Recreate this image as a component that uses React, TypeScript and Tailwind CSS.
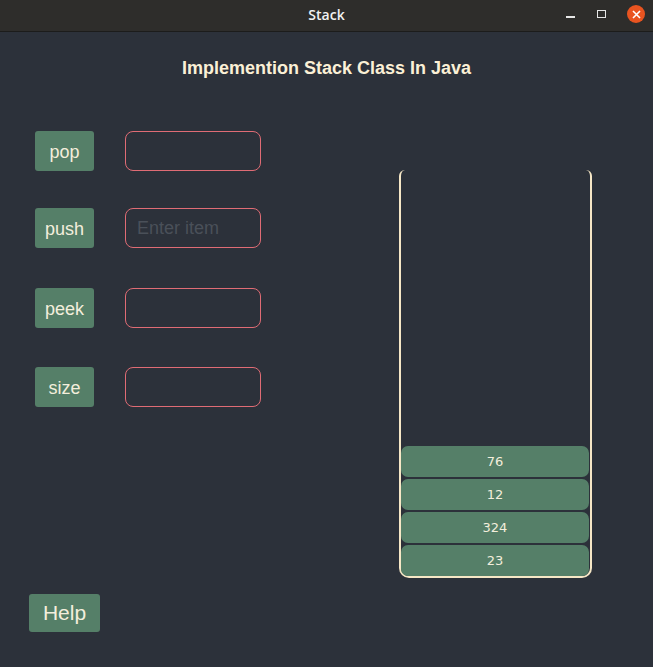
const ops = ['pop', 'push', 'peek', 'size'];
const rowGaps = ['mt-0', 'mt-[37px]', 'mt-[40px]', 'mt-[39px]'];
const stackItems = ['76', '12', '324', '23'];

const TitleBar = () => (
  <div className="relative h-[32px] shrink-0 bg-[#2e2d2b] border-b border-[#1c1c1b] flex items-center justify-center pb-[3px]">
    <span className="text-[14px] font-semibold text-[#f2f2f2] font-['Open_Sans',sans-serif]">
      Stack
    </span>
    <div className="absolute right-[8px] top-0 h-full flex items-center pb-[3px]">
      <div className="w-[9px] h-[1.5px] bg-[#e6e6e6] mt-[6px] mr-[22px]" />
      <div className="w-[9px] h-[8px] border-[1.5px] border-[#e6e6e6] mr-[21px]" />
      <div className="w-[18px] h-[18px] rounded-full bg-[#e95420] flex items-center justify-center">
        <svg width="9" height="9" viewBox="0 0 9 9">
          <path d="M1 1 L8 8 M8 1 L1 8" stroke="#fff" strokeWidth="1.6" />
        </svg>
      </div>
    </div>
  </div>
);

const OpRow = ({ name, gap }: { name: string; gap: string }) => (
  <div className={`flex items-center ${gap}`}>
    <button className="w-[59px] h-[40px] rounded-[3px] bg-[#557f68] text-[#f3eedc] text-[18px] pt-[2px]">
      {name}
    </button>
    <input
      className="ml-[31px] w-[136px] h-[40px] rounded-[8px] border border-[#e06c75] bg-transparent px-[11px] pt-[1px] text-[18px] text-[#f3eedc] outline-none placeholder:text-[#4a5059]"
      placeholder={name === 'push' ? 'Enter item' : ''}
    />
  </div>
);

export default function App() {
  return (
    <div className="w-[653px] h-[667px] flex flex-col bg-[#2c313a] font-['Liberation_Sans',Arial,sans-serif] overflow-hidden">
      <TitleBar />
      <div className="flex-1 flex flex-col">
        <h1 className="mt-[26px] h-[20px] leading-[20px] text-center text-[18px] font-bold text-[#fbf0d6]">
          Implemention Stack Class In Java
        </h1>
        <div className="flex mt-[53px]">
          <div className="flex flex-col pl-[35px]">
            {ops.map((op, i) => (
              <OpRow key={op} name={op} gap={rowGaps[i]} />
            ))}
          </div>
          <div className="ml-auto mr-[61px] mt-[39px] w-[193px] h-[408px] border-2 border-t-0 border-[#f6e7c6] rounded-t-[6px] rounded-b-[10px] flex flex-col justify-end gap-[2px] pl-0 pr-[1px]">
            {stackItems.map((v) => (
              <div
                key={v}
                className="h-[31px] rounded-[7px] bg-[#557f68] flex items-center justify-center text-[13px] text-[#f3eedc] font-['DejaVu_Sans',sans-serif]"
              >
                {v}
              </div>
            ))}
          </div>
        </div>
        <div className="mt-[16px] pl-[29px]">
          <button className="w-[71px] h-[38px] rounded-[3px] bg-[#557f68] text-[#f3eedc] text-[21px]">
            Help
          </button>
        </div>
      </div>
    </div>
  );
}
